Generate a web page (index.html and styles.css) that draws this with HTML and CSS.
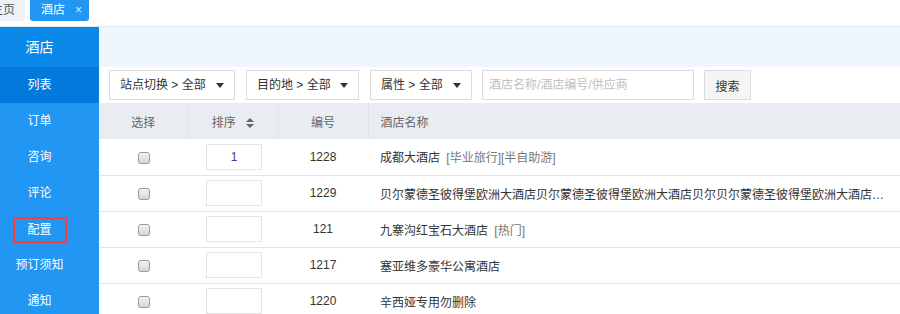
FILE: index.html
```html
<!DOCTYPE html>
<html lang="zh-CN">
<head>
    <meta charset="UTF-8">
    <title>酒店列表</title>
    <link rel="stylesheet" href="styles.css">
</head>
<body>
    <div class="tabs">
        <span class="tab tab-home">主页</span>
        <span class="tab tab-active">酒店<span class="tab-close">×</span></span>
    </div>
    <div class="layout">
        <ul class="sidebar">
            <li class="side-head">酒店</li>
            <li class="active">列表</li>
            <li>订单</li>
            <li>咨询</li>
            <li>评论</li>
            <li><span class="marked">配置</span></li>
            <li>预订须知</li>
            <li>通知</li>
        </ul>
        <div class="main">
            <div class="banner"></div>
            <div class="filters">
                <div class="select sel-site">站点切换 &gt; 全部 <span class="caret"></span></div>
                <div class="select sel-dest">目的地 &gt; 全部 <span class="caret"></span></div>
                <div class="select sel-attr">属性 &gt; 全部 <span class="caret"></span></div>
                <input class="search-input" type="text" placeholder="酒店名称/酒店编号/供应商">
                <button class="search-btn">搜索</button>
            </div>
            <table class="grid">
                <thead>
                    <tr>
                        <th class="c-check">选择</th>
                        <th class="c-sort">排序 <svg class="sort-icon" width="8" height="10" viewBox="0 0 8 10"><path d="M0 4 L4 0 L8 4 Z M0 6 L8 6 L4 10 Z" fill="#666"/></svg></th>
                        <th class="c-id">编号</th>
                        <th class="c-name">酒店名称</th>
                    </tr>
                </thead>
                <tbody>
                    <tr>
                        <td class="c-check"><span class="checkbox"></span></td>
                        <td class="c-sort"><input class="sort-input" type="text" value="1"></td>
                        <td class="c-id">1228</td>
                        <td class="c-name"><div class="name">成都大酒店 <span class="tag">[毕业旅行][半自助游]</span></div></td>
                    </tr>
                    <tr>
                        <td class="c-check"><span class="checkbox"></span></td>
                        <td class="c-sort"><input class="sort-input" type="text" value=""></td>
                        <td class="c-id">1229</td>
                        <td class="c-name"><div class="name">贝尔蒙德圣彼得堡欧洲大酒店贝尔蒙德圣彼得堡欧洲大酒店贝尔贝尔蒙德圣彼得堡欧洲大酒店贝尔蒙德圣彼得堡欧洲大酒店</div></td>
                    </tr>
                    <tr>
                        <td class="c-check"><span class="checkbox"></span></td>
                        <td class="c-sort"><input class="sort-input" type="text" value=""></td>
                        <td class="c-id">121</td>
                        <td class="c-name"><div class="name">九寨沟红宝石大酒店 <span class="tag">[热门]</span></div></td>
                    </tr>
                    <tr>
                        <td class="c-check"><span class="checkbox"></span></td>
                        <td class="c-sort"><input class="sort-input" type="text" value=""></td>
                        <td class="c-id">1217</td>
                        <td class="c-name"><div class="name">塞亚维多豪华公寓酒店</div></td>
                    </tr>
                    <tr>
                        <td class="c-check"><span class="checkbox"></span></td>
                        <td class="c-sort"><input class="sort-input" type="text" value=""></td>
                        <td class="c-id">1220</td>
                        <td class="c-name"><div class="name">辛西娅专用勿删除</div></td>
                    </tr>
                </tbody>
            </table>
        </div>
    </div>
</body>
</html>
```

FILE: styles.css
```css
* { box-sizing: border-box; }
body {
    margin: 0;
    font-family: "Liberation Sans", "Noto Sans CJK SC", sans-serif;
    font-size: 12px;
    color: #333;
    background: #fff;
    overflow: hidden;
}

/* top tabs */
.tabs {
    height: 27px;
    border-bottom: 1px solid #dfe7ef;
    display: flex;
    gap: 5px;
    align-items: flex-start;
}
.tab {
    height: 21px;
    line-height: 20px;
    border-radius: 0 0 3px 3px;
    font-size: 12px;
}
.tab-home {
    background: #eef1f6;
    color: #555;
    margin-left: -16px;
    padding: 0 10px 0 7px;
}
.tab-active {
    background: #2196f3;
    color: #fff;
    width: 59px;
    padding: 0 7px 0 11px;
    display: flex;
    justify-content: space-between;
}
.tab-close { font-size: 12px; color: #dbeeff; }

.layout { display: flex; height: 287px; }

/* sidebar */
.sidebar {
    list-style: none;
    margin: 0;
    padding: 0;
    width: 99px;
    background: #2196f3;
    color: #fff;
}
.sidebar li {
    height: 36px;
    line-height: 36px;
    text-align: center;
    padding-right: 20px;
    font-size: 12px;
}
.sidebar .side-head { height: 40px; line-height: 40px; background: #0b89e9; font-size: 14px; }
.sidebar .active { background: #0479dc; }
.marked {
    display: inline-block;
    border: 2px solid #ff3a3a;
    width: 54px;
    height: 26px;
    line-height: 22px;
    vertical-align: middle;
}

/* main */
.main { flex: 1; }
.banner { height: 40px; background: #eff6fe; }
.filters {
    height: 36px;
    padding: 3px 0 0 10px;
    display: flex;
    gap: 11px;
}
.select {
    height: 30px;
    line-height: 28px;
    border: 1px solid #dcdcdc;
    padding: 0 10px;
    color: #333;
    display: flex;
    align-items: center;
    gap: 4px;
    white-space: nowrap;
}
.sel-site { width: 126px; }
.sel-dest { width: 113px; }
.sel-attr { width: 102px; }
.caret {
    margin-left: auto;
    border-left: 4px solid transparent;
    border-right: 4px solid transparent;
    border-top: 5px solid #333;
}
.search-input {
    width: 212px;
    height: 30px;
    margin-left: -1px;
    border: 1px solid #dcdcdc;
    padding: 0 6px;
    font: inherit;
    font-size: 12px;
}
.search-input::placeholder { color: #c0c0c0; }
.search-btn {
    width: 47px;
    height: 30px;
    margin-left: -1px;
    border: 1px solid #dcdcdc;
    background: #f5f5f5;
    font: inherit;
    font-size: 12px;
    color: #333;
    padding: 0;
}

/* table */
.grid {
    width: 801px;
    border-collapse: collapse;
    table-layout: fixed;
}
.grid th {
    height: 36px;
    background: #e9edf2;
    color: #666;
    font-weight: normal;
    border-right: 1px solid #dfe3e8;
    text-align: center;
}
.grid th:last-child { border-right: none; }
.grid td {
    height: 36px;
    border-bottom: 1px solid #e3e3e3;
    text-align: center;
}
.c-check { width: 89px; }
.c-sort { width: 90px; }
.c-id { width: 90px; }
.grid .c-name { text-align: left; padding: 0 7px 0 12px; }
.sort-icon { vertical-align: -1px; margin-left: 7px; }
.checkbox {
    display: inline-block;
    width: 12px;
    height: 12px;
    border: 1px solid #999;
    border-radius: 3px;
    background: linear-gradient(#f2f2f2, #d6d6d6);
    vertical-align: middle;
}
.sort-input {
    width: 56px;
    height: 26px;
    border: 1px solid #e3e3e3;
    text-align: center;
    font: inherit;
    font-size: 12px;
    color: #5a2f8a;
    margin-left: 2px;
}
.name {
    white-space: nowrap;
    overflow: hidden;
    text-overflow: ellipsis;
}
.tag { color: #777; margin-left: 3px; }
```
